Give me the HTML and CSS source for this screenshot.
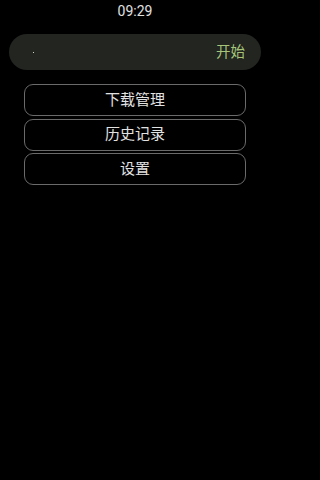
FILE: index.html
```html
<!DOCTYPE html>
<html lang="zh">
<head>
<meta charset="utf-8">
<link rel="stylesheet" href="styles.css">
</head>
<body>
<div class="status">09:29</div>
<div class="search">
  <span class="cursor"></span>
  <span class="go">开始</span>
</div>
<div class="menu">
  <div class="btn">下载管理</div>
  <div class="btn">历史记录</div>
  <div class="btn">设置</div>
</div>
</body>
</html>
```
FILE: styles.css
```css
html, body {
  margin: 0;
  padding: 0;
  background: #000;
  width: 270px;
  height: 480px;
  overflow: hidden;
  font-family: Roboto, "Noto Sans CJK SC", sans-serif;
}
.status {
  height: 22px;
  line-height: 22px;
  text-align: center;
  color: #e0e0e0;
  font-size: 14px;
}
.search {
  margin: 12px 9px 0 9px;
  height: 36px;
  border-radius: 18px;
  background: #222520;
  display: flex;
  align-items: center;
  justify-content: space-between;
  padding: 0 16px 0 24px;
}
.cursor {
  width: 1px;
  height: 1px;
  background: #cfd6c4;
}
.go {
  color: #a6c57a;
  font-size: 14.5px;
  padding-bottom: 3px;
}
.menu {
  margin: 14px 24px 0 24px;
  display: flex;
  flex-direction: column;
  gap: 2.5px;
}
.btn {
  height: 30px;
  border: 1px solid #6a6a6a;
  border-radius: 9px;
  color: #e2e2e2;
  font-size: 15px;
  line-height: 1;
  display: flex;
  align-items: center;
  justify-content: center;
}
```
